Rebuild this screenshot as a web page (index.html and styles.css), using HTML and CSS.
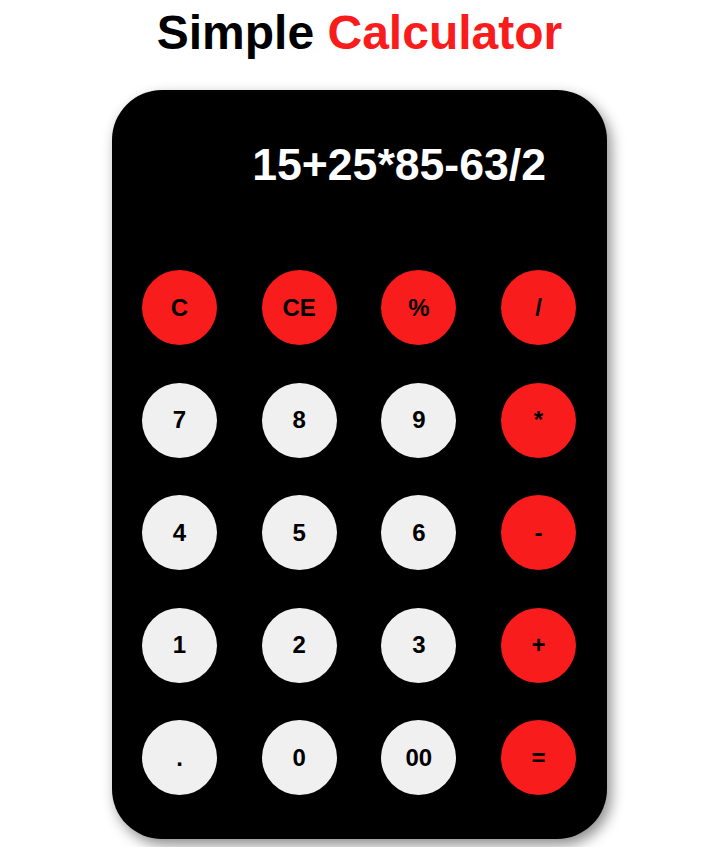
FILE: index.html
```html
<!DOCTYPE html>
<html>
<head>
<meta charset="utf-8">
<link rel="stylesheet" href="styles.css">
</head>
<body>
<h1 class="title">Simple <span class="accent">Calculator</span></h1>
<div class="calc">
  <div class="display">15+25*85-63/2</div>
  <div class="keys">
    <div class="key op">C</div>
    <div class="key op">CE</div>
    <div class="key op">%</div>
    <div class="key op">/</div>
    <div class="key">7</div>
    <div class="key">8</div>
    <div class="key">9</div>
    <div class="key op">*</div>
    <div class="key">4</div>
    <div class="key">5</div>
    <div class="key">6</div>
    <div class="key op">-</div>
    <div class="key">1</div>
    <div class="key">2</div>
    <div class="key">3</div>
    <div class="key op">+</div>
    <div class="key">.</div>
    <div class="key">0</div>
    <div class="key">00</div>
    <div class="key op">=</div>
  </div>
</div>
</body>
</html>
```
FILE: styles.css
```css
html, body {
  margin: 0;
  padding: 0;
  background: #ffffff;
}
body {
  font-family: "Liberation Sans", Arial, sans-serif;
  padding: 8px 10px 8px 7px;
}
.title {
  margin: 0;
  text-align: center;
  font-size: 48px;
  font-weight: bold;
  line-height: 50px;
  color: #000;
}
.accent {
  color: #f91c1c;
}
.calc {
  width: 495px;
  height: 749px;
  box-sizing: border-box;
  margin: 32px auto 0;
  background: #000;
  border-radius: 50px;
  box-shadow: 4px 6px 14px rgba(0, 0, 0, 0.45);
  padding: 0 31px 44px 30px;
  display: flex;
  flex-direction: column;
}
.display {
  height: 180px;
  box-sizing: border-box;
  padding: 50px 30px 0 0;
  text-align: right;
  color: #fff;
  font-weight: bold;
  font-size: 44.6px;
  line-height: 50px;
}
.keys {
  display: grid;
  grid-template-columns: repeat(4, 75px);
  grid-auto-rows: 75px;
  justify-content: space-between;
  row-gap: 37.5px;
}
.key {
  width: 75px;
  height: 75px;
  border-radius: 50%;
  background: #f0f0f0;
  color: #000;
  font-weight: bold;
  font-size: 24px;
  display: flex;
  align-items: center;
  justify-content: center;
}
.key.op {
  background: #f91c1c;
}
```
